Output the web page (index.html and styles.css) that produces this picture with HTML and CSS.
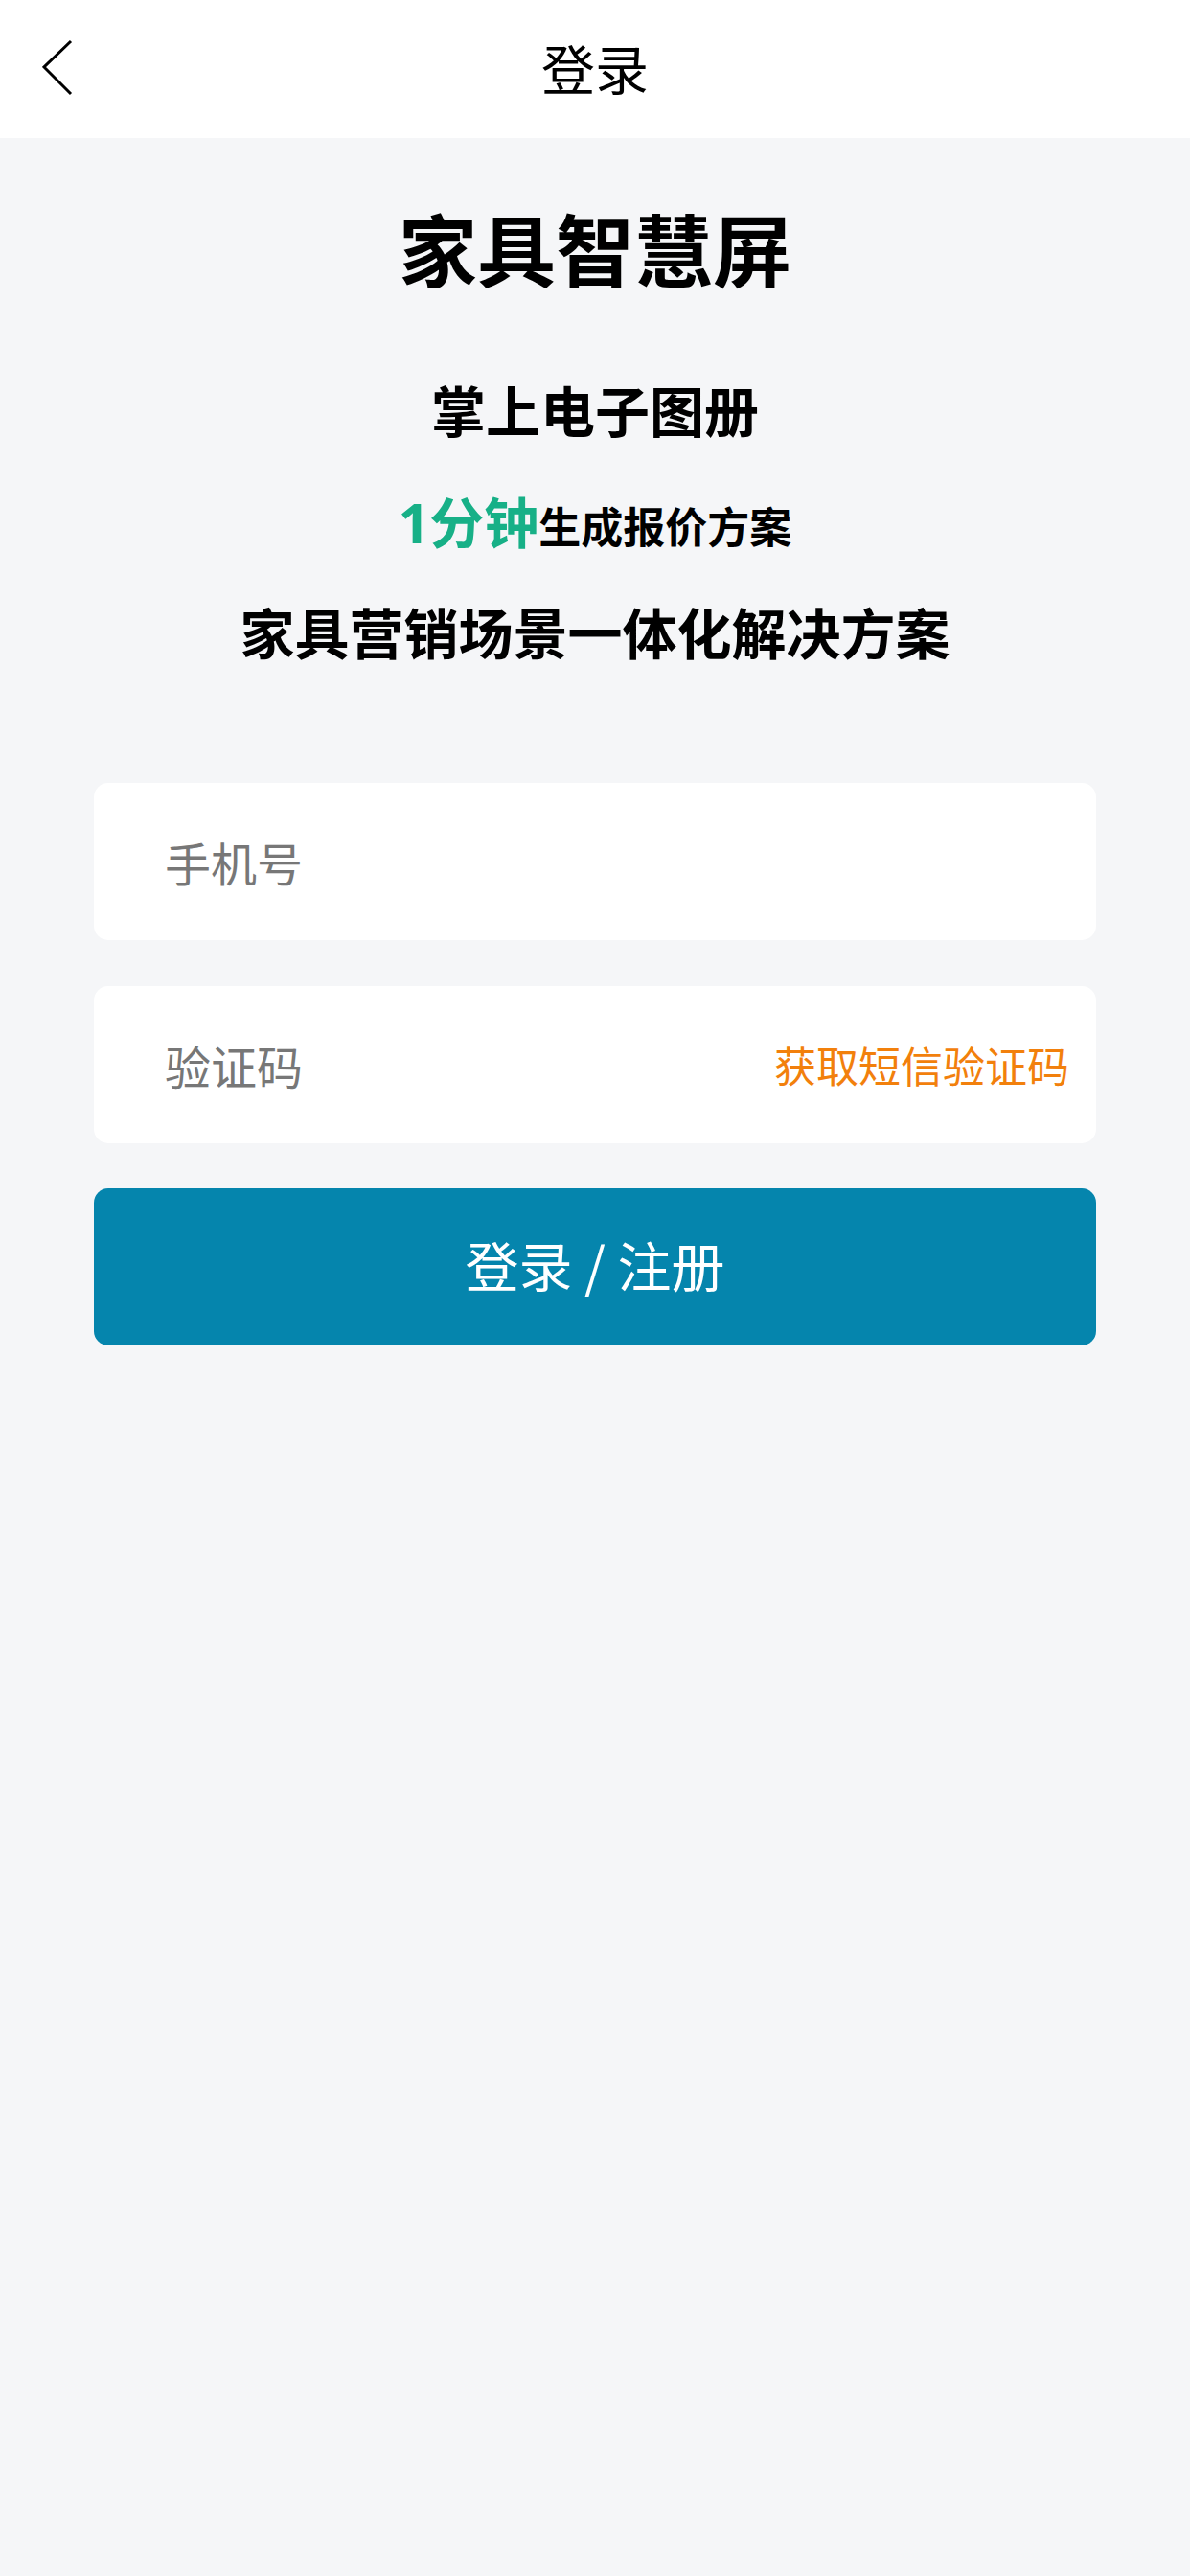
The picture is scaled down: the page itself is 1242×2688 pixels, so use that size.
FILE: index.html
```html
<!DOCTYPE html>
<html lang="zh-CN">
<head>
    <meta charset="UTF-8">
    <meta name="viewport" content="width=device-width, initial-scale=1.0">
    <title>登录</title>
    <link rel="stylesheet" href="styles.css">
</head>
<body>

    <header class="nav-bar">
        <a class="nav-back" href="#">
            <svg width="40" height="60" viewBox="0 0 40 60">
                <polyline points="30,2 2,29 30,57" fill="none" stroke="#000" stroke-width="3"/>
            </svg>
        </a>
        <div class="nav-title">登录</div>
    </header>

    <main class="page">
        <h1 class="brand">家具智慧屏</h1>
        <p class="slogan">掌上电子图册</p>
        <p class="slogan slogan-small"><span class="highlight">1分钟</span>生成报价方案</p>
        <p class="slogan">家具营销场景一体化解决方案</p>

        <form class="login-form" onsubmit="return false;">
            <div class="field">
                <input type="tel" placeholder="手机号">
            </div>
            <div class="field">
                <input type="text" placeholder="验证码">
                <button type="button" class="sms-btn">获取短信验证码</button>
            </div>
            <button type="submit" class="submit-btn">登录 / 注册</button>
        </form>
    </main>

</body>
</html>
```

FILE: styles.css
```css
* {
    box-sizing: border-box;
}

html, body {
    margin: 0;
    padding: 0;
}

body {
    width: 1242px;
    min-height: 2688px;
    background-color: #f5f6f8;
    font-family: "Noto Sans CJK SC", "Noto Sans", sans-serif;
    color: #000;
}

.nav-bar {
    position: relative;
    height: 144px;
    background-color: #fff;
    display: flex;
    align-items: center;
    justify-content: center;
}

.nav-back {
    position: absolute;
    left: 44px;
    top: 41px;
    display: block;
    width: 40px;
    height: 60px;
}

.nav-back svg {
    display: block;
}

.nav-title {
    font-size: 56px;
    line-height: 1;
    margin-top: -4px;
}

.page {
    padding: 64px 98px 0;
    text-align: center;
}

.brand {
    margin: 0;
    font-size: 82px;
    line-height: 100px;
    font-weight: 700;
}

.slogan {
    margin: 0;
    font-size: 57px;
    line-height: 80px;
    font-weight: 700;
}

.brand + .slogan {
    margin-top: 78px;
}

.slogan-small {
    margin-top: 39px;
    font-size: 44px;
}

.slogan-small + .slogan {
    margin-top: 30px;
}

.highlight {
    color: #17b087;
    font-size: 57px;
    font-family: "Noto Sans", "Noto Sans CJK SC", sans-serif;
}

.login-form {
    margin-top: 119px;
    display: flex;
    flex-direction: column;
    gap: 48px;
}

.field {
    height: 164px;
    background-color: #fff;
    border-radius: 15px;
    display: flex;
    align-items: center;
    padding: 0 28px 0 74px;
}

.field input {
    flex: 1;
    min-width: 0;
    border: none;
    outline: none;
    background: transparent;
    font-family: inherit;
    font-size: 48px;
    color: #333;
    padding: 0;
}

.field input::placeholder {
    color: #777;
}

.sms-btn {
    border: none;
    background: none;
    padding: 0;
    font-family: inherit;
    font-size: 44px;
    color: #f2800c;
    cursor: pointer;
}

.submit-btn {
    height: 164px;
    border: none;
    border-radius: 15px;
    background-color: #0585ad;
    color: #fff;
    font-family: inherit;
    font-size: 56px;
    padding: 0 0 8px;
    cursor: pointer;
    margin-top: -1px;
}
```
